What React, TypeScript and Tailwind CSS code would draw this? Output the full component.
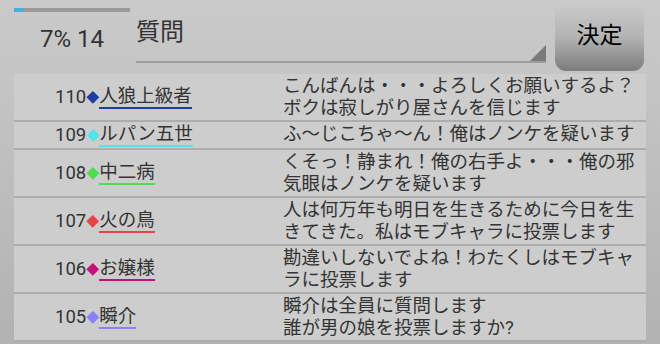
import React from "react";

const rows = [
  { n: 110, name: "人狼上級者", color: "#1e3ca6", msg: ["こんばんは・・・よろしくお願いするよ？", "ボクは寂しがり屋さんを信じます"] },
  { n: 109, name: "ルパン五世", color: "#4fe6ea", msg: ["ふ～じこちゃ～ん！俺はノンケを疑います"] },
  { n: 108, name: "中二病", color: "#4fdc4f", msg: ["くそっ！静まれ！俺の右手よ・・・俺の邪", "気眼はノンケを疑います"] },
  { n: 107, name: "火の鳥", color: "#e84444", msg: ["人は何万年も明日を生きるために今日を生", "きてきた。私はモブキャラに投票します"] },
  { n: 106, name: "お嬢様", color: "#c8107c", msg: ["勘違いしないでよね！わたくしはモブキャ", "ラに投票します"] },
  { n: 105, name: "瞬介", color: "#8a80ff", msg: ["瞬介は全員に質問します", "誰が男の娘を投票しますか?"] },
];

const font = { fontFamily: "Roboto, 'Noto Sans CJK JP', sans-serif" };

export default function App() {
  return (
    <div
      className="w-[660px] h-[344px] overflow-hidden bg-gradient-to-b from-[#cacaca] to-[#b2b2b2] text-[#333]"
      style={font}
    >
      <div className="flex h-[74px]">
        <div className="w-[136px] flex flex-col">
          <div className="ml-[14px] mt-[8px] w-[116px] h-[4px] bg-[#9a9a9a] flex">
            <div className="w-[9px] h-full bg-[#3fb2e2]" />
          </div>
          <div className="ml-[40px] mt-[13px] text-[24px] leading-[28px]">7% 14</div>
        </div>
        <div className="w-[410px] h-[63px] relative border-b-2 border-[#9c9c9c]">
          <div className="mt-[18px] text-[24px] leading-[28px]">質問</div>
          <svg className="absolute right-0 bottom-0" width="16" height="16" viewBox="0 0 16 16">
            <polygon points="16,0 16,16 0,16" fill="#7a7a7a" />
          </svg>
        </div>
        <div className="ml-[9px] mt-[2px] w-[89px] h-[69px] rounded-[11px] bg-gradient-to-b from-[#cbcbcb] via-[#b4b4b4] to-[#7c7c7c] flex items-center justify-center text-black text-[23px]">
          決定
        </div>
      </div>
      <div className="ml-[14px] w-[632px] bg-[#cdcdcd]">
        {rows.map((r) => (
          <div key={r.n} className="flex border-b-2 border-[#adadad] py-[1px]">
            <div className="w-[269px] pl-[41px] flex items-center text-[18.5px] leading-[22px]">
              <span>{r.n}</span>
              <span className="text-[13px] leading-none" style={{ color: r.color }}>◆</span>
              <span className="leading-[22px] border-b-2" style={{ borderColor: r.color }}>{r.name}</span>
            </div>
            <div className="flex-1 text-[18.5px] leading-[22px]">
              {r.msg.map((m, i) => (
                <div key={i}>{m}</div>
              ))}
            </div>
          </div>
        ))}
      </div>
    </div>
  );
}
